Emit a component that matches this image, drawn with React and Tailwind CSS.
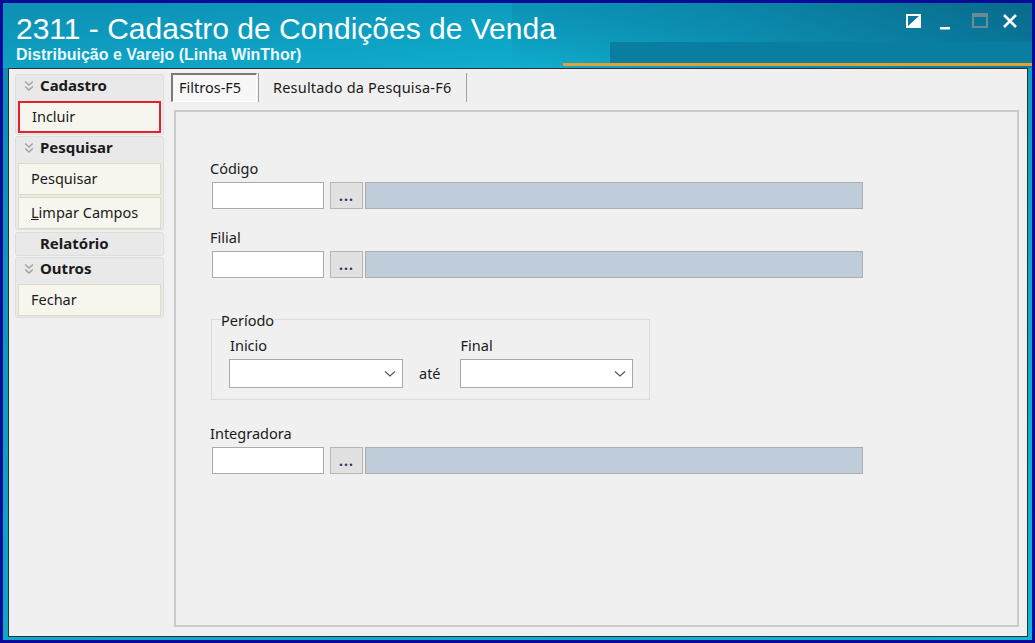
import React from "react";

const ui = { fontFamily: '"Noto Sans", "Open Sans", sans-serif' };

function Chevron() {
  return (
    <svg width="10" height="13" viewBox="0 0 10 13" className="shrink-0">
      <path d="M1.2 1.5 L5 5 L8.8 1.5 M1.2 6.5 L5 10 L8.8 6.5" fill="none" stroke="#a0a0a0" strokeWidth="1.4" />
    </svg>
  );
}

function GroupHeader({ title, chevron = true }) {
  return (
    <div className="h-[22px] flex items-center pl-[8px] gap-[6px]">
      {chevron ? <Chevron /> : <span className="w-[10px]" />}
      <span className="text-[15px] font-bold text-[#1a1a1a] leading-none -mt-[2px]">{title}</span>
    </div>
  );
}

function Item({ children, red }) {
  return (
    <div
      className={
        "h-[32px] mx-[2px] flex items-center pl-[12px] text-[14.5px] text-[#1a1a1a] bg-[#f7f6ee] " +
        (red ? "border-2 border-[#e3202c]" : "border border-[#e0dbc0]")
      }
    >
      {children}
    </div>
  );
}

function Group({ children, className = "" }) {
  return (
    <div className={"rounded-[3px] border border-[#dedede] bg-[#e9e9e9] " + className}>{children}</div>
  );
}

function LookupRow() {
  return (
    <div className="flex items-center h-[27px]">
      <div className="w-[112px] h-[27px] bg-white border border-[#ababab]" />
      <div className="ml-[6px] w-[33px] h-[27px] bg-[#e1e1e1] border border-[#b5b5b5] flex items-center justify-center">
        <span className="text-[14px] font-bold leading-none text-[#303070] tracking-[1px] mt-[1px]">...</span>
      </div>
      <div className="ml-[2px] w-[498px] h-[27px] bg-[#bfcddb] border border-[#adadad]" />
    </div>
  );
}

function Select({ w }) {
  return (
    <div className="h-[29px] bg-white border border-[#a8a8a8] flex items-center justify-end pr-[6px]" style={{ width: w }}>
      <svg width="12" height="8" viewBox="0 0 12 8">
        <path d="M1 1.5 L6 6 L11 1.5" fill="none" stroke="#555" strokeWidth="1.2" />
      </svg>
    </div>
  );
}

export default function App() {
  return (
    <div className="w-[1035px] h-[643px] bg-[#0a0a98] p-[3px] overflow-hidden" style={ui}>
      <div className="h-full flex flex-col bg-[linear-gradient(160deg,#0b8cb0_0%,#0c9ec0_40%,#0fb6d6_100%)]">
        {/* Header */}
        <div className="relative h-[65px] shrink-0 bg-[linear-gradient(175deg,#0d8fb3_0%,#0ea4c6_50%,#12bcd9_100%)] overflow-hidden">
          <div className="absolute right-0 top-0 w-[520px] h-[65px] bg-[linear-gradient(200deg,#086a8c_0%,#0b86a8_45%,rgba(14,160,196,0)_100%)]" />
          <div className="absolute left-[607px] right-0 top-[39px] h-[22px] bg-[#0a7ea0]" />
          <div className="absolute left-[560px] right-0 top-[60px] h-[3px] bg-[#e2a037]" />
          <div className="relative pl-[13px] pt-[9px]">
            <div className="text-[30px] leading-[34px] text-white" style={{ fontFamily: '"Liberation Sans", Arial, sans-serif' }}>
              2311 - Cadastro de Condições de Venda
            </div>
            <div className="text-[16px] leading-[17px] font-bold text-[#eaf8ff]" style={{ fontFamily: '"Liberation Sans", Arial, sans-serif' }}>
              Distribuição e Varejo (Linha WinThor)
            </div>
          </div>
          {/* window buttons */}
          <div className="absolute top-[9px] left-[902px] flex items-center">
            <svg width="18" height="18" viewBox="0 0 18 18">
              <rect x="2" y="3" width="13" height="12" fill="none" stroke="#fff" strokeWidth="2" />
              <path d="M2 15 L15 3 L15 15 Z" fill="#fff" />
            </svg>
            <svg width="18" height="18" viewBox="0 0 18 18" className="ml-[15px]">
              <rect x="2" y="15" width="10" height="2.5" fill="#fff" />
            </svg>
            <svg width="18" height="18" viewBox="0 0 18 18" className="ml-[15px]">
              <rect x="2" y="2" width="14" height="13" fill="none" stroke="#6a8a96" strokeWidth="2" />
              <rect x="2" y="2" width="14" height="3" fill="#6a8a96" />
            </svg>
            <svg width="18" height="18" viewBox="0 0 18 18" className="ml-[12px]">
              <path d="M3 3 L15 15 M15 3 L3 15" stroke="#fff" strokeWidth="2.6" />
            </svg>
          </div>
        </div>

        {/* Content */}
        <div className="flex-1 ml-[5px] mr-[4px] mb-[3px] border border-[#303030] bg-[#f0f0f0] flex min-h-0">
          {/* Sidebar */}
          <div className="w-[149px] ml-[6px] pt-[5px] flex flex-col">
            <Group>
              <GroupHeader title="Cadastro" />
              <div className="pt-[4px] pb-[1px]">
                <Item red>Incluir</Item>
              </div>
            </Group>
            <Group className="mt-[1px]">
              <GroupHeader title="Pesquisar" />
              <div className="pt-[4px] flex flex-col gap-[2px]">
                <Item>Pesquisar</Item>
                <Item>
                  <span><span className="underline">L</span>impar Campos</span>
                </Item>
              </div>
            </Group>
            <Group className="mt-[2px]">
              <GroupHeader title="Relatório" chevron={false} />
            </Group>
            <Group className="mt-[1px]">
              <GroupHeader title="Outros" />
              <div className="pt-[4px] pb-[1px]">
                <Item>Fechar</Item>
              </div>
            </Group>
          </div>

          {/* Main */}
          <div className="flex-1 flex flex-col ml-[7px] mr-[8px] pt-[4px] pb-[9px]">
            {/* tabs */}
            <div className="h-[29px] flex items-stretch text-[14.5px] text-[#1a1a1a]">
              <div className="w-[86px] border-t-2 border-l-2 border-[#7a7a7a] border-b border-r border-b-white border-r-white bg-[#f7f7f7] flex items-center pl-[6px]">
                Filtros-F5
              </div>
              <div className="ml-[1px] w-[1px] bg-[#a0a0a0]" />
              <div className="w-[207px] flex items-center pl-[14px] tracking-[0.2px]">Resultado da Pesquisa-F6</div>
              <div className="w-[1px] bg-[#a0a0a0]" />
            </div>

            {/* panel */}
            <div className="flex-1 mt-[8px] ml-[3px] border-2 border-[#cacaca] text-[14.5px] text-[#1a1a1a]">
              <div className="pl-[34px] pt-[47px]">
                <div className="leading-[18px]">Código</div>
                <div className="mt-[5px] ml-[2px]"><LookupRow /></div>

                <div className="mt-[19px] leading-[18px]">Filial</div>
                <div className="mt-[5px] ml-[2px]"><LookupRow /></div>

                <div className="mt-[41px] ml-[1px] w-[439px] h-[81px] border border-[#dcdcdc] relative">
                  <div className="absolute left-[9px] -top-[9px] bg-[#f0f0f0] leading-[18px] pr-[1px]">Período</div>
                  <div className="flex items-start pl-[17px] pt-[16px]">
                    <div>
                      <div className="leading-[18px] ml-[1px]">Inicio</div>
                      <div className="mt-[5px]"><Select w={174} /></div>
                    </div>
                    <div className="ml-[16px] mt-[28px] leading-[18px]">até</div>
                    <div className="ml-[19px]">
                      <div className="leading-[18px] ml-[1px]">Final</div>
                      <div className="mt-[5px]"><Select w={173} /></div>
                    </div>
                  </div>
                </div>

                <div className="mt-[24px] leading-[18px]">Integradora</div>
                <div className="mt-[5px] ml-[2px]"><LookupRow /></div>
              </div>
            </div>
          </div>
        </div>
      </div>
    </div>
  );
}
